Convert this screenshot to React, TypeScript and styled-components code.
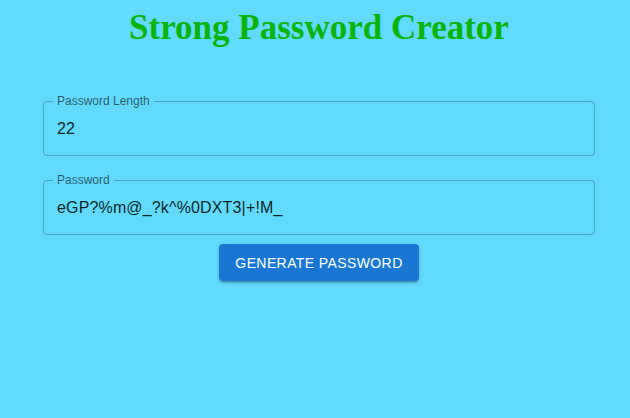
import styled, { createGlobalStyle } from "styled-components";

const GlobalStyle = createGlobalStyle`
  html, body {
    margin: 0;
    background-color: #61dafb;
    min-height: 100%;
  }
  body {
    font-family: "Liberation Sans", Arial, sans-serif;
  }
`;

type FieldProps = {
  label: string;
  value: string;
};

const OutlinedField = ({ label, value }: FieldProps) => (
  <FieldSet>
    <Legend>{label}</Legend>
    <Input value={value} readOnly />
  </FieldSet>
);

const App = () => {
  return (
    <Page>
      <GlobalStyle />
      <Title>Strong Password Creator</Title>
      <Form>
        <OutlinedField label="Password Length" value="22" />
        <OutlinedField label="Password" value="eGP?%m@_?k^%0DXT3|+!M_" />
        <GenerateButton type="button">Generate Password</GenerateButton>
      </Form>
    </Page>
  );
};

export default App;

const Page = styled.div`
  box-sizing: border-box;
  width: 630px;
  height: 418px;
  padding-left: 8px;
  display: flex;
  flex-direction: column;
  align-items: center;
`;

const Title = styled.h1`
  margin: 8px 0 0;
  font-family: "Liberation Serif", "Times New Roman", serif;
  font-size: 35px;
  font-weight: 700;
  color: #0ab40a;
`;

const Form = styled.div`
  margin-top: 47px;
  width: 552px;
  display: flex;
  flex-direction: column;
  align-items: center;
  gap: 18px;
`;

const FieldSet = styled.fieldset`
  align-self: stretch;
  margin: 0;
  padding: 0 9px;
  border: 1px solid rgba(0, 0, 0, 0.23);
  border-radius: 4px;
  display: flex;
  flex-direction: column;
`;

const Legend = styled.legend`
  padding: 0 4px;
  font-size: 12px;
  line-height: 12px;
  color: rgba(0, 0, 0, 0.6);
`;

const Input = styled.input`
  box-sizing: content-box;
  height: 23px;
  padding: 10px 4px 15px;
  border: none;
  outline: none;
  background: transparent;
  font-family: "Liberation Sans", Arial, sans-serif;
  font-size: 16px;
  letter-spacing: 0.00938em;
  color: rgba(0, 0, 0, 0.87);
`;

const GenerateButton = styled.button`
  margin-top: -9px;
  width: 200px;
  height: 37px;
  padding: 6px 16px;
  border: none;
  border-radius: 4px;
  background-color: #1976d2;
  color: #fff;
  font-family: "Liberation Sans", Arial, sans-serif;
  font-size: 14px;
  font-weight: 500;
  letter-spacing: 0.02857em;
  text-transform: uppercase;
  box-shadow: 0 3px 1px -2px rgba(0, 0, 0, 0.2), 0 2px 2px 0 rgba(0, 0, 0, 0.14),
    0 1px 5px 0 rgba(0, 0, 0, 0.12);
  cursor: pointer;
`;
